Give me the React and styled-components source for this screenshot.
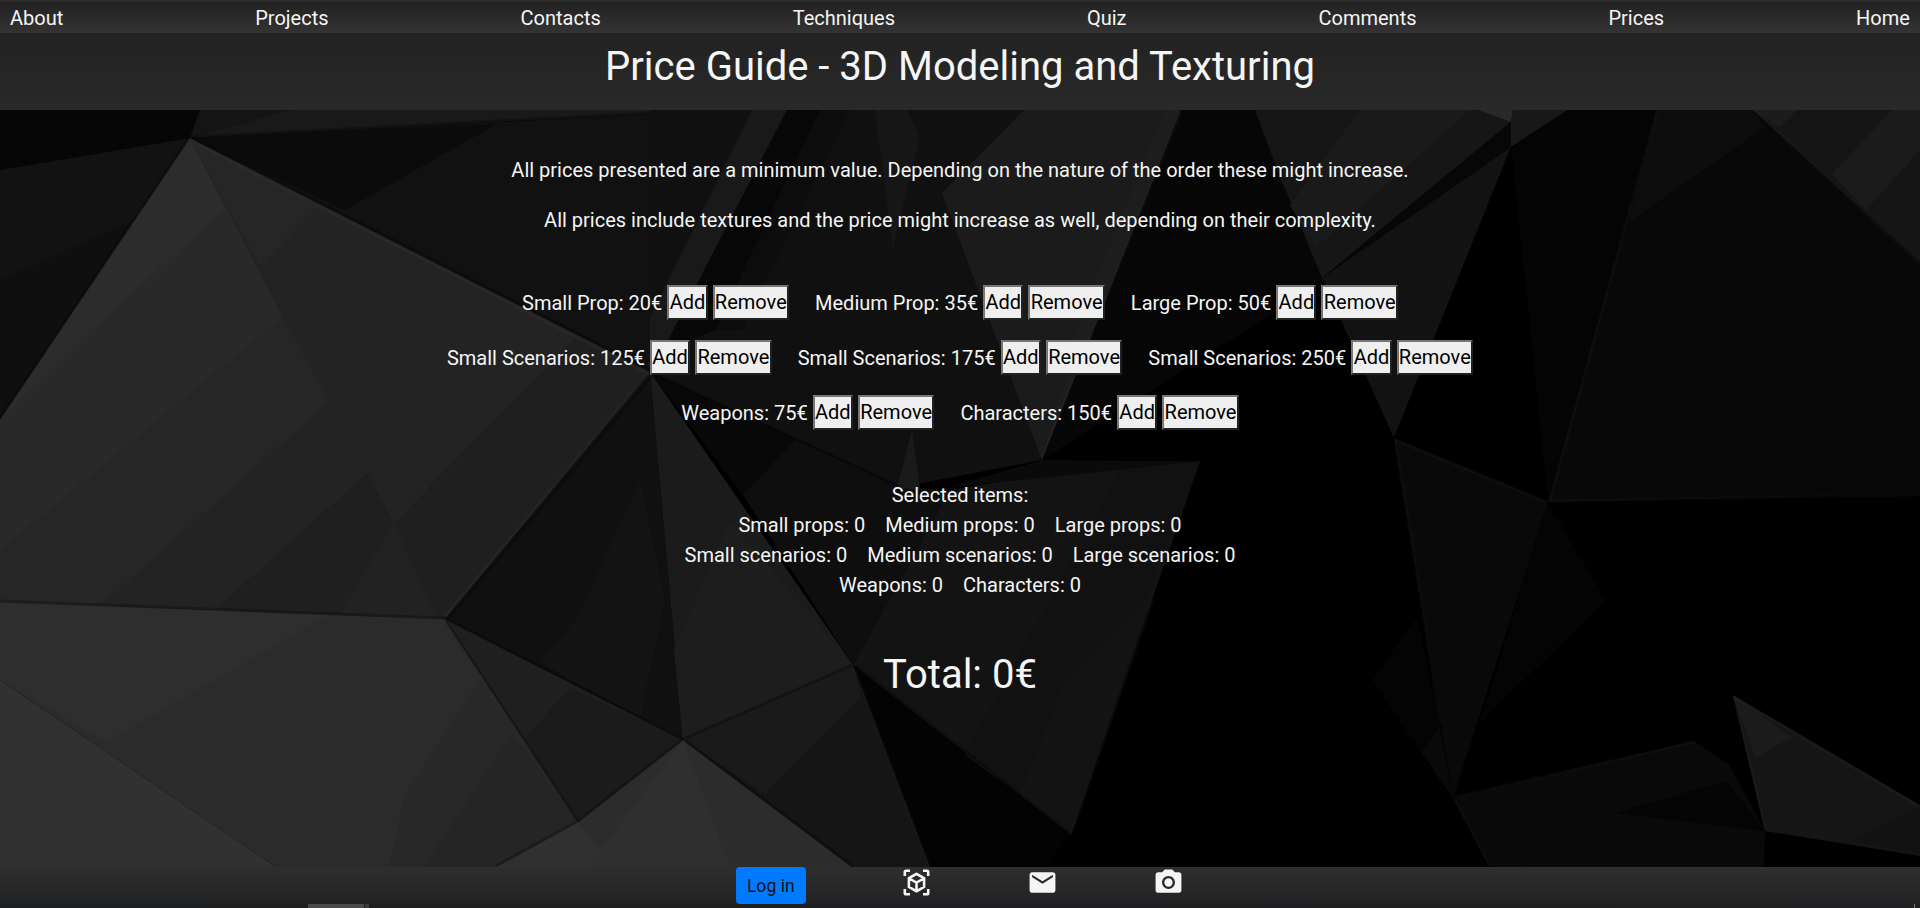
import React, { useState } from "react";
import styled, { createGlobalStyle } from "styled-components";
import { MdEmail, MdPhotoCamera } from "react-icons/md";

const GlobalStyle = createGlobalStyle`
  *, *::before, *::after { box-sizing: border-box; }
  body {
    margin: 0;
    background: #000;
    color: whitesmoke;
    font: 400 20px/30px Roboto, "Liberation Sans", sans-serif;
    overflow: hidden;
  }
`;

const Page = styled.div`
  display: flex;
  flex-direction: column;
  height: 908px;
`;

const Nav = styled.nav`
  display: flex;
  justify-content: space-between;
  height: 33px;
  padding: 1px 10px 0;
  border-top: 2px solid #2d2d2d;
  background: linear-gradient(#202020, #242424 15%, #333);
`;

const NavLink = styled.a`
  color: whitesmoke;
  text-decoration: none;
`;

const Header = styled.header`
  height: 77px;
  padding-top: 10px;
  background: linear-gradient(#222, #292929);
  text-align: center;
`;

const Title = styled.h1`
  margin: 0;
  font-size: 40px;
  font-weight: 400;
  line-height: 48px;
`;

const Main = styled.main`
  position: relative;
  flex: 1;
  overflow: hidden;
`;

const Backdrop = styled.svg`
  position: absolute;
  inset: 0;
  width: 100%;
  height: 100%;
`;

const Content = styled.div`
  position: relative;
  display: flex;
  flex-direction: column;
  align-items: center;
  padding-top: 45px;
`;

const Note = styled.p`
  margin: 0 0 20px;
`;

const Offers = styled.section`
  display: flex;
  flex-direction: column;
  align-items: center;
  gap: 20px;
  margin: 30px 0 50px;
`;

const Row = styled.div`
  display: flex;
  gap: ${(p) => p.$gap}px;
`;

const Offer = styled.div`
  display: flex;
  gap: 5px;
  height: 35px;
`;

const Label = styled.span`
  padding-top: 3px;
`;

const OfferButton = styled.button`
  height: 35px;
  padding: 0 0.3px 1px;
  border: 2px solid;
  border-color: #767676 #212121 #212121 #767676;
  background: #efefef;
  color: #000;
  font: inherit;
`;

const Summary = styled.section`
  display: flex;
  flex-direction: column;
  align-items: center;
`;

const Total = styled.h1`
  margin: 51px 0 0;
  font-size: 40px;
  font-weight: 400;
  line-height: 48px;
`;

const Footer = styled.footer`
  display: flex;
  justify-content: center;
  height: 37px;
  background: linear-gradient(#2e2e2e, #222);
`;

const LoginButton = styled.button`
  width: 70px;
  height: 37px;
  margin-right: 95.5px;
  padding: 0;
  border: 0;
  border-radius: 4px;
  background: #007bff;
  color: #111;
  font: 400 17.6px/26px Roboto, "Liberation Sans", sans-serif;
`;

const IconLinks = styled.div`
  display: flex;
  gap: 95px;
  svg { display: block; width: 31px; height: 31px; margin-top: -0.5px; }
`;

const Strip = styled.div`
  display: flex;
  height: 4px;
  padding-left: 308px;
  background: linear-gradient(90deg, #1c1f21, #201f23);
`;

const StripItem = styled.i`
  width: ${(p) => p.$width}px;
  margin-left: ${(p) => p.$offset || 0}px;
  background: ${(p) => p.$color};
`;

const facets = [
  ["0,110 200,110 190,138 0,170", "#060606"],
  ["0,170 190,138 0,420", "#121212"],
  ["0,280 145,215 0,420", "#0f0f0f"],
  ["200,110 650,110 650,114 190,138", "#191919"],
  ["200,110 290,110 190,138", "#141414"],
  ["190,138 650,114 650,372", "#111111"],
  ["190,138 497,124 345,210", "#0b0b0b"],
  ["190,138 650,372 445,619 0,602 0,420", "#232323"],
  ["190,138 274,300 329,402 100,606 0,602 0,420", "#262626"],
  ["190,138 274,300 282,317 0,550 0,420", "#292929"],
  ["190,138 225,209 80,340 0,420", "#2c2c2c"],
  ["190,138 318,207 260,266", "#262626"],
  ["367,473 394,523 547,367 576,337 650,372 445,619 215,610", "#1f1f1f"],
  ["394,523 437,619 340,615", "#222222"],
  ["0,602 445,619 578,822 496,867 276,867 0,680", "#2b2b2b"],
  ["0,602 330,615 106,743 0,680", "#2e2e2e"],
  ["480,679 578,822 496,867 389,867 405,794", "#282828"],
  ["512,733 578,822 496,867 424,867", "#252525"],
  ["0,680 276,867 0,867", "#313131"],
  ["650,372 683,740 445,619", "#101010"],
  ["578,617 640,480 665,600 640,718 540,662", "#131313"],
  ["445,619 683,740 578,822", "#1f1f1f"],
  ["570,688 683,740 578,822 525,737", "#1b1b1b"],
  ["578,822 683,740 852,867 496,867", "#2c2c2c"],
  ["578,822 614,867 496,867", "#303030"],
  ["683,740 730,867 588,867", "#2f2f2f"],
  ["650,372 853,665 683,740", "#1b1b1b"],
  ["730,520 853,665 683,740 674,650", "#1d1d1d"],
  ["683,740 853,665 930,867 852,867", "#151515"],
  ["683,740 853,665 861,697 765,794", "#1a1a1a"],
  ["853,665 1071,835 1044,867 930,867", "#030303"],
  ["650,114 650,372 901,487 1042,460 1181,110 650,110", "#101010"],
  ["752,110 787,110 662,352 650,372 650,318", "#191919"],
  ["787,110 820,110 715,330 662,352", "#070707"],
  ["820,110 850,110 742,330 715,330", "#0c0c0c"],
  ["875,110 907,110 920,137 893,247", "#161616"],
  ["1024,110 1181,110 1042,460 942,193", "#1b1b1b"],
  ["1165,110 1181,110 1042,460 1085,305", "#1d1d1d"],
  ["650,372 901,487 743,495", "#0b0b0b"],
  ["650,372 795,440 743,495", "#080808"],
  ["743,495 795,440 901,487 950,490 853,665", "#0e0e0e"],
  ["912,430 920,490 897,488", "#1a1a1a"],
  ["950,490 1042,475 1200,461 1071,835 853,665", "#131313"],
  ["1120,470 1200,461 1145,600 1065,680 1020,795 965,755", "#111111"],
  ["950,487 1042,460 1200,461 1042,478", "#0a0a0a"],
  ["1125,680 1151,600 1071,835", "#080808"],
  ["1181,110 1255,110 1325,280 1042,460", "#060606"],
  ["1325,280 1341,320 1394,438 1200,461 1042,460", "#000000"],
  ["1255,110 1478,110 1511,122 1322,278 1280,177", "#161616"],
  ["1360,110 1470,110 1315,248 1290,205", "#1a1a1a"],
  ["1478,110 1513,110 1511,122", "#292929"],
  ["1513,110 1568,110 1511,147 1511,122", "#181818"],
  ["1511,122 1511,147 1322,278", "#070707"],
  ["1511,147 1394,438 1322,278", "#121212"],
  ["1568,110 1657,110 1548,502 1511,147", "#040404"],
  ["1511,147 1548,502 1394,438", "#000000"],
  ["1657,110 1753,110 1920,262 1920,494 1548,502", "#080808"],
  ["1657,110 1753,110 1765,127 1629,222", "#0d0d0d"],
  ["1753,110 1920,110 1920,262", "#151515"],
  ["1753,110 1797,110 1779,128", "#1c1c1c"],
  ["1892,110 1920,110 1920,150 1866,210 1832,174", "#1b1b1b"],
  ["1394,438 1548,502 1453,798 1421,600", "#090909"],
  ["1548,502 1606,600 1480,723", "#040404"],
  ["1417,617 1372,680 1421,752 1440,727", "#040404"],
  ["1440,727 1421,752 1453,798", "#090909"],
  ["1453,798 1694,741 1729,765 1765,831 1764,867 1490,867", "#090909"],
  ["1615,813 1727,781 1765,831", "#040404"],
  ["1733,695 1920,805 1920,856 1765,831", "#151515"],
  ["1733,695 1792,737 1755,758", "#1b1b1b"],
  ["1920,805 1920,856 1850,840", "#121212"],
];

const shadows = [
  "193,138 650,370", "189,138 0,418", "652,376 449,618", "0,601 445,618 682,739",
  "446,621 578,821 496,866", "578,821 683,739 852,665", "686,741 854,867",
  "650,372 901,487", "855,665 1070,833", "190,137 650,113",
];

const highlights = [
  "193,142 648,374 445,616", "1181,112 1042,458", "1394,440 1547,502", "1395,440 1421,600 1440,725",
  "1550,500 1657,110", "1550,501 1920,495", "1754,110 1920,264", "1454,797 1694,742",
  "1455,800 1490,867", "1734,697 1920,807", "1734,697 1765,829", "854,667 930,867",
  "1153,600 1072,833",
];

function LowPoly() {
  return (
    <Backdrop viewBox="0 110 1920 757" preserveAspectRatio="none" aria-hidden="true">
      <rect y="110" width="1920" height="757" fill="#000" />
      {facets.map(([points, fill]) => (
        <polygon key={points} points={points} fill={fill} />
      ))}
      {shadows.map((points) => (
        <polyline key={points} points={points} fill="none" stroke="#000" strokeOpacity=".25" strokeWidth="3" />
      ))}
      {highlights.map((points) => (
        <polyline key={points} points={points} fill="none" stroke="#fff" strokeOpacity=".025" strokeWidth="3" />
      ))}
    </Backdrop>
  );
}

function CubeIcon() {
  return (
    <svg viewBox="-2.5 -2.5 31 31" fill="none" stroke="currentColor" strokeLinejoin="round">
      <path
        strokeWidth="2.6"
        d="M1.3 6.5V2.6Q1.3 1.3 2.6 1.3H6.5M19.5 1.3H23.4Q24.7 1.3 24.7 2.6V6.5M24.7 19.5V23.4Q24.7 24.7 23.4 24.7H19.5M6.5 24.7H2.6Q1.3 24.7 1.3 23.4V19.5"
      />
      <path
        strokeWidth="2.6"
        d="M13 4.3L20.6 8.7V17.4L13 21.8L5.4 17.4V8.7ZM5.8 9L13 13.2L20.2 9M13 13.2V21.4"
      />
    </svg>
  );
}

const links = ["About", "Projects", "Contacts", "Techniques", "Quiz", "Comments", "Prices", "Home"];

const offerRows = [
  [["sp", "Small Prop", 20], ["mp", "Medium Prop", 35], ["lp", "Large Prop", 50]],
  [["ss", "Small Scenarios", 125], ["ms", "Small Scenarios", 175], ["ls", "Small Scenarios", 250]],
  [["w", "Weapons", 75], ["c", "Characters", 150]],
];

const summaryRows = [
  [["sp", "Small props"], ["mp", "Medium props"], ["lp", "Large props"]],
  [["ss", "Small scenarios"], ["ms", "Medium scenarios"], ["ls", "Large scenarios"]],
  [["w", "Weapons"], ["c", "Characters"]],
];

export default function App() {
  const [counts, setCounts] = useState({});
  const change = (id, step) =>
    setCounts((c) => ({ ...c, [id]: Math.max(0, (c[id] || 0) + step) }));
  const total = offerRows.flat().reduce((sum, [id, , price]) => sum + price * (counts[id] || 0), 0);

  return (
    <Page>
      <GlobalStyle />
      <Nav>
        {links.map((name) => <NavLink key={name} href="#">{name}</NavLink>)}
      </Nav>
      <Header><Title>Price Guide - 3D Modeling and Texturing</Title></Header>
      <Main>
        <LowPoly />
        <Content>
          <Note>All prices presented are a minimum value. Depending on the nature of the order these might increase.</Note>
          <Note>All prices include textures and the price might increase as well, depending on their complexity.</Note>
          <Offers>
            {offerRows.map((row, i) => (
              <Row key={i} $gap={26}>
                {row.map(([id, name, price]) => (
                  <Offer key={id}>
                    <Label>{`${name}: ${price}€`}</Label>
                    <OfferButton onClick={() => change(id, 1)}>Add</OfferButton>
                    <OfferButton onClick={() => change(id, -1)}>Remove</OfferButton>
                  </Offer>
                ))}
              </Row>
            ))}
          </Offers>
          <Summary>
            <span>Selected items:</span>
            {summaryRows.map((row, i) => (
              <Row key={i} $gap={20}>
                {row.map(([id, name]) => <span key={id}>{`${name}: ${counts[id] || 0}`}</span>)}
              </Row>
            ))}
          </Summary>
          <Total>{`Total: ${total}€`}</Total>
        </Content>
      </Main>
      <Footer>
        <LoginButton>Log in</LoginButton>
        <IconLinks>
          <CubeIcon />
          <MdEmail />
          <MdPhotoCamera />
        </IconLinks>
      </Footer>
      <Strip>
        <StripItem $width={56} $color="#4a4a4a" />
        <StripItem $width={4} $offset={1} $color="#3c3c3c" />
        <StripItem $width={1} $offset={1545} $color="#777" />
      </Strip>
    </Page>
  );
}
